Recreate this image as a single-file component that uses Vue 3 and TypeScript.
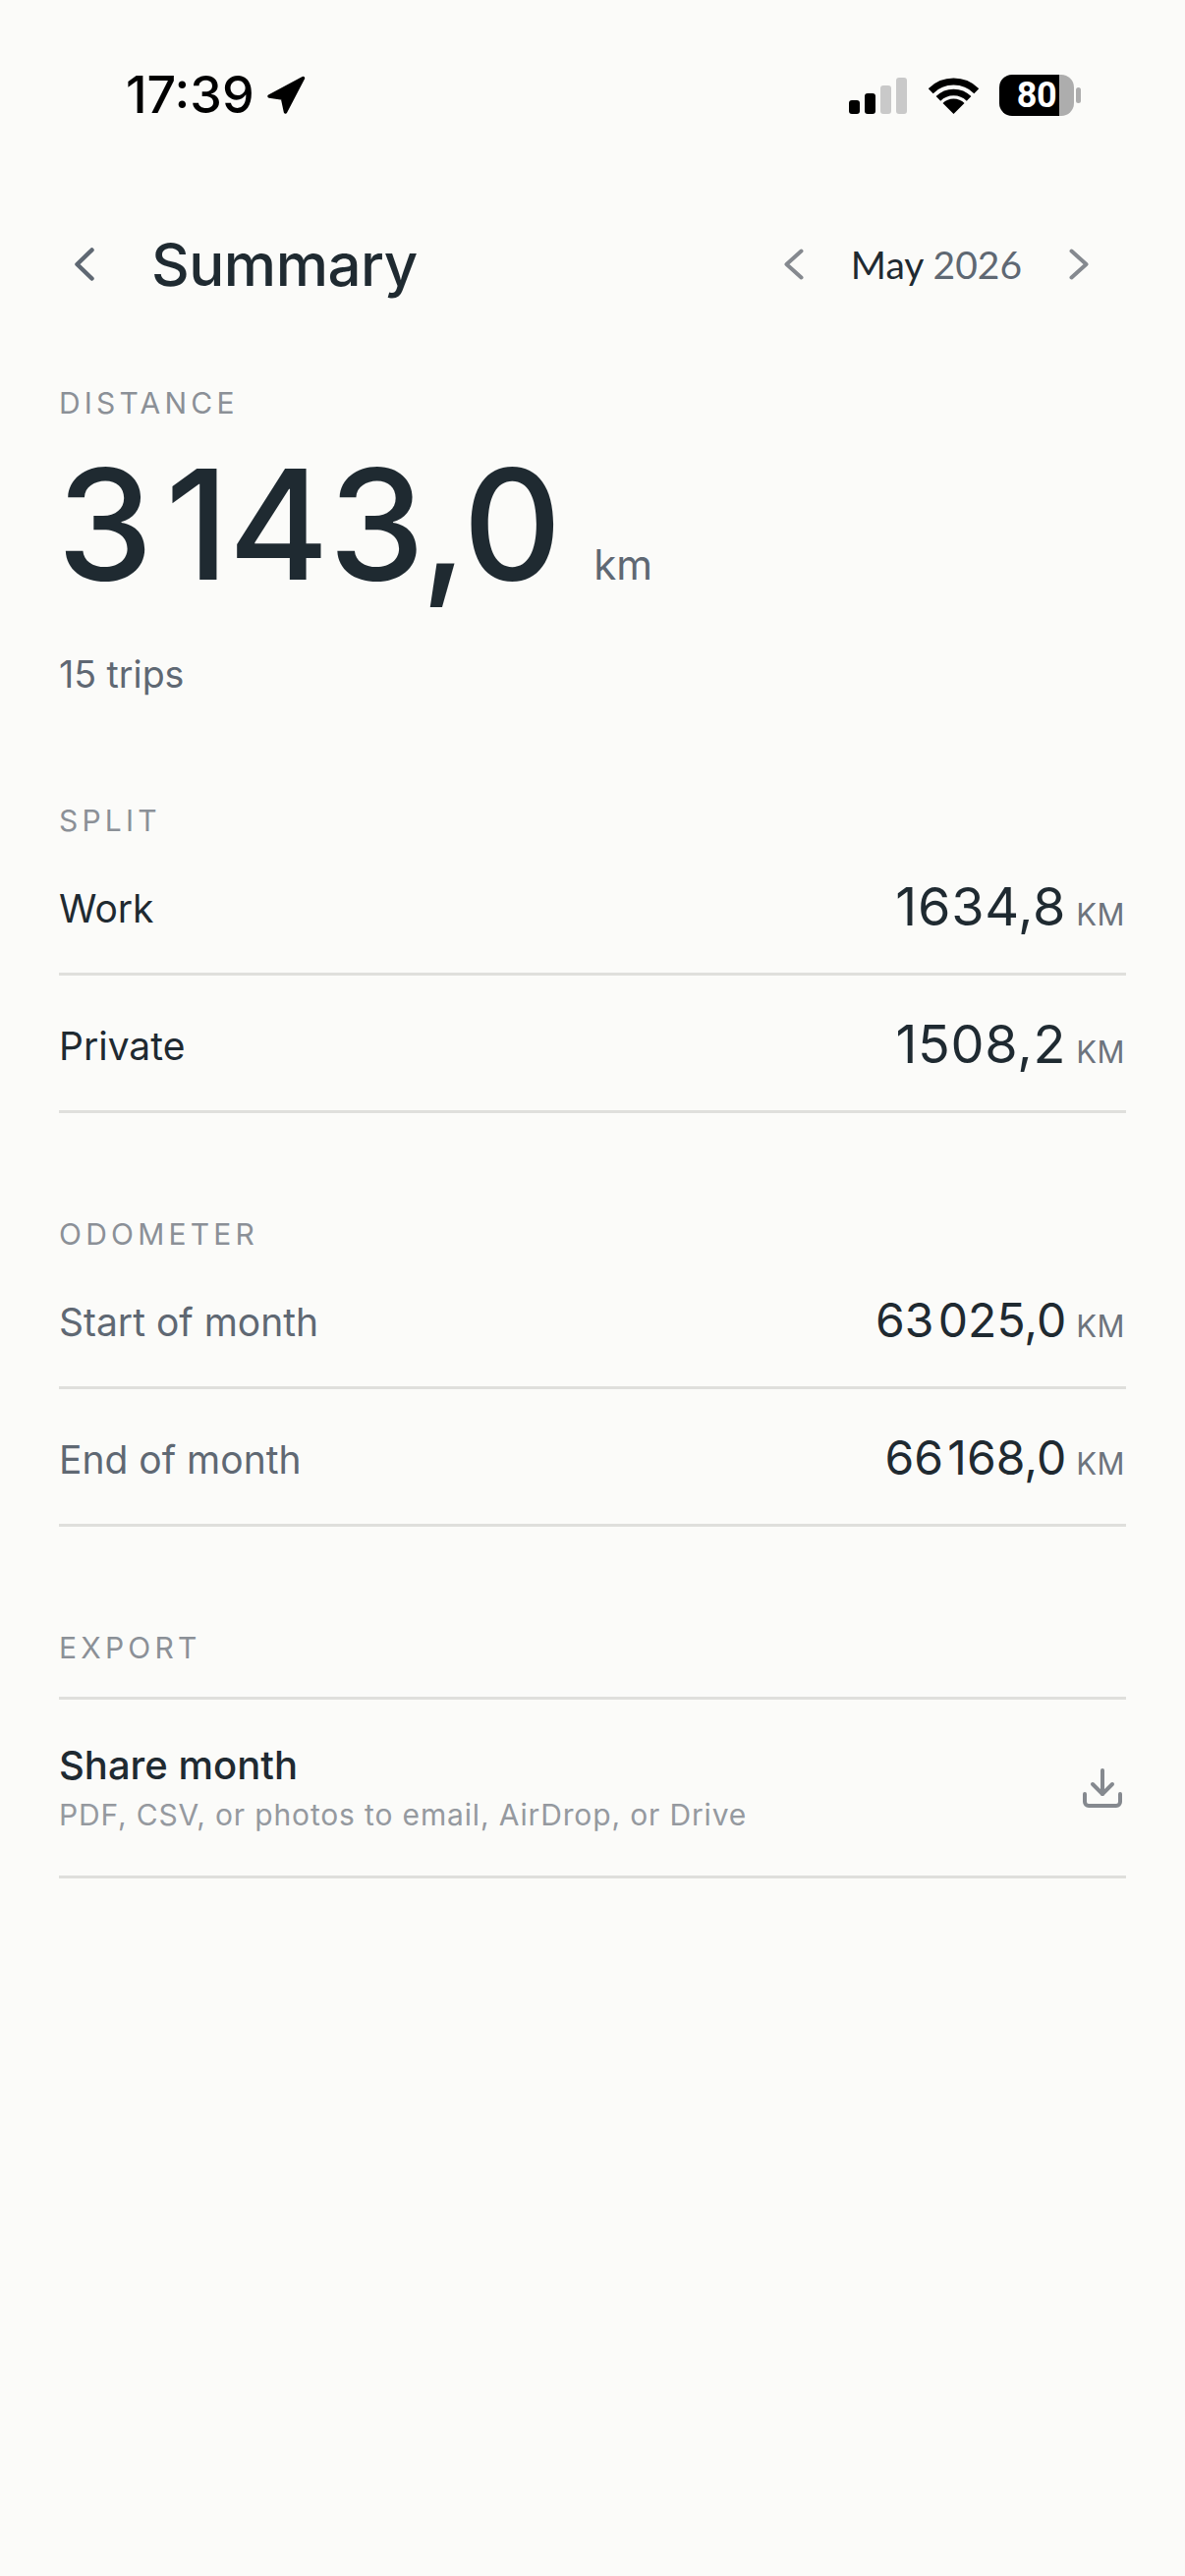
<script setup lang="ts">
interface Row {
  label: string
  value: string
}

const splitRows: Row[] = [
  { label: 'Work', value: '1634,8' },
  { label: 'Private', value: '1508,2' }
]

const odometerRows: Row[] = [
  { label: 'Start of month', value: '63\u200a025,0' },
  { label: 'End of month', value: '66\u200a168,0' }
]
</script>

<template>
  <div class="page">
    <div class="status-bar">
      <div class="status-left">
        <span class="clock">17:39</span>
        <svg class="nav-arrow" width="41" height="40" viewBox="0 0 40 40">
          <path d="M2.5 21 L37 2.5 L19 37 L16 23 Z" fill="#000" stroke="#000" stroke-width="3.5" stroke-linejoin="round" />
        </svg>
      </div>
      <div class="status-right">
        <div class="signal">
          <span class="bar on b1"></span>
          <span class="bar on b2"></span>
          <span class="bar b3"></span>
          <span class="bar b4"></span>
        </div>
        <svg class="wifi" width="51" height="37" viewBox="0 0 51 37" fill="none">
          <path d="M25.5 37 L14.5 26 A15.5 15.5 0 0 1 36.5 26 Z" fill="#000" />
          <path d="M9.9 21.4 A22 22 0 0 1 41.1 21.4" stroke="#000" stroke-width="6.5" />
          <path d="M2.2 13.7 A33 33 0 0 1 48.8 13.7" stroke="#000" stroke-width="7" />
        </svg>
        <div class="battery">
          <div class="battery-body">80</div>
          <span class="battery-nub"></span>
        </div>
      </div>
    </div>

    <header class="header">
      <div class="header-left">
        <svg class="back" width="20" height="34" viewBox="0 0 20 34" fill="none">
          <path d="M17.5 2.5 L2.5 17 L17.5 31.5" stroke="#5f6873" stroke-width="4.5" stroke-linecap="round" stroke-linejoin="round" />
        </svg>
        <h1 class="title">Summary</h1>
      </div>
      <div class="month-nav">
        <svg width="20" height="32" viewBox="0 0 20 32" fill="none">
          <path d="M17.5 2.5 L2.5 16 L17.5 29.5" stroke="#85898f" stroke-width="4" stroke-linecap="round" stroke-linejoin="round" />
        </svg>
        <div class="month"><span class="month-name">May</span> <span class="month-year">2026</span></div>
        <svg width="20" height="32" viewBox="0 0 20 32" fill="none">
          <path d="M2.5 2.5 L17.5 16 L2.5 29.5" stroke="#85898f" stroke-width="4" stroke-linecap="round" stroke-linejoin="round" />
        </svg>
      </div>
    </header>

    <section class="distance">
      <div class="section-label">DISTANCE</div>
      <div class="hero">
        <span class="hero-value">3&#8202;143,0</span>
        <span class="hero-unit">km</span>
      </div>
      <div class="trips">15 trips</div>
    </section>

    <section class="section">
      <div class="section-label">SPLIT</div>
      <div v-for="row in splitRows" :key="row.label" class="row">
        <span class="row-label">{{ row.label }}</span>
        <span class="row-value-wrap">
          <span class="row-value">{{ row.value }}</span>
          <span class="row-unit">KM</span>
        </span>
      </div>
    </section>

    <section class="section">
      <div class="section-label">ODOMETER</div>
      <div v-for="row in odometerRows" :key="row.label" class="row muted">
        <span class="row-label">{{ row.label }}</span>
        <span class="row-value-wrap">
          <span class="row-value">{{ row.value }}</span>
          <span class="row-unit">KM</span>
        </span>
      </div>
    </section>

    <section class="section">
      <div class="section-label export-label">EXPORT</div>
      <div class="share">
        <div class="share-text">
          <div class="share-title">Share month</div>
          <div class="share-sub">PDF, CSV, or photos to email, AirDrop, or Drive</div>
        </div>
        <svg class="share-icon" width="48" height="48" viewBox="0 0 24 24" fill="none" stroke="#85898f" stroke-width="2" stroke-linecap="round" stroke-linejoin="round">
          <path d="M21 15v4a2 2 0 0 1-2 2H5a2 2 0 0 1-2-2v-4" />
          <path d="M7 10l5 5 5-5" />
          <path d="M12 15V3" />
        </svg>
      </div>
    </section>
  </div>
</template>

<style scoped>
.page {
  min-height: 2622px;
  box-sizing: border-box;
  background: #fbfbf9;
  color: #1f2a31;
  font-family: Inter, "Liberation Sans", sans-serif;
}

.status-bar {
  height: 204px;
  box-sizing: border-box;
  padding: 76px 106px 0 128px;
  display: flex;
  justify-content: space-between;
  align-items: flex-start;
}

.status-left {
  display: flex;
  align-items: center;
  gap: 12px;
  height: 42px;
}

.clock {
  font-size: 52px;
  font-weight: 500;
  line-height: 42px;
  color: #000;
}

.status-right {
  display: flex;
  align-items: center;
  height: 42px;
}

.signal {
  display: flex;
  align-items: flex-end;
  gap: 5px;
  height: 37px;
  margin-right: 22px;
}

.bar {
  width: 11px;
  border-radius: 3px;
  background: #c9c9c9;
}

.bar.on {
  background: #000;
}

.b1 { height: 14px; }
.b2 { height: 21px; }
.b3 { height: 29px; }
.b4 { height: 37px; }

.wifi {
  margin-right: 21px;
}

.battery {
  display: flex;
  align-items: center;
  gap: 2px;
}

.battery-body {
  width: 76px;
  height: 42px;
  border-radius: 13px;
  background: linear-gradient(90deg, #000 80%, #adadad 80%);
  color: #fff;
  font-family: Roboto, sans-serif;
  font-size: 36px;
  font-weight: 700;
  line-height: 42px;
  text-align: center;
  letter-spacing: -0.5px;
}

.battery-nub {
  width: 5px;
  height: 16px;
  border-radius: 3px;
  background: #adadad;
}

.header {
  height: 132px;
  box-sizing: border-box;
  padding: 0 98px 3px 76px;
  display: flex;
  justify-content: space-between;
  align-items: center;
}

.header-left {
  display: flex;
  align-items: center;
  gap: 58px;
}

.title {
  margin: 0;
  font-size: 60px;
  font-weight: 500;
  letter-spacing: -0.5px;
  line-height: 72px;
}

.month-nav {
  display: flex;
  align-items: center;
  gap: 48px;
}

.month {
  font-family: Lato, sans-serif;
  font-size: 39px;
  line-height: 52px;
}

.month-name {
  color: #1f2a31;
}

.month-year {
  color: #5f6873;
}

.distance {
  margin-top: 56px;
  padding: 0 60px;
}

.section-label {
  height: 36px;
  font-size: 30px;
  line-height: 36px;
  letter-spacing: 4.2px;
  color: #8b9097;
}

.hero {
  height: 212px;
  display: flex;
  align-items: baseline;
  gap: 33px;
}

.hero-value {
  font-size: 156px;
  font-weight: 500;
  line-height: 212px;
  letter-spacing: -0.5px;
  margin-left: -2px;
}

.hero-unit {
  font-size: 42px;
  font-weight: 400;
  color: #5f6873;
}

.trips {
  margin-top: 22px;
  height: 50px;
  font-size: 37.5px;
  line-height: 50px;
  color: #5f6873;
}

.section {
  margin-top: 105px;
  padding: 0 60px;
}

.row {
  height: 140px;
  box-sizing: border-box;
  padding-top: 5px;
  border-bottom: 3px solid #dfdfdc;
  display: flex;
  justify-content: space-between;
  align-items: center;
}

.row-label {
  font-size: 39px;
}

.muted .row-label {
  color: #5f6873;
}

.row-value-wrap {
  display: flex;
  align-items: baseline;
  gap: 10px;
  margin-top: -4px;
}

.row-value {
  font-size: 54px;
  font-weight: 400;
  letter-spacing: 0.7px;
}

.muted .row-value {
  font-size: 48px;
  letter-spacing: 0;
}

.row-unit {
  font-size: 31px;
  letter-spacing: 0.5px;
  color: #6d747d;
  margin-right: 1px;
}

.export-label {
  margin-bottom: 32px;
}

.share {
  height: 185px;
  box-sizing: border-box;
  border-top: 3px solid #dfdfdc;
  border-bottom: 3px solid #dfdfdc;
  display: flex;
  justify-content: space-between;
  align-items: center;
}

.share-title {
  font-size: 40px;
  font-weight: 500;
  line-height: 50px;
}

.share-sub {
  margin-top: 5px;
  font-size: 30px;
  line-height: 40px;
  letter-spacing: 0.85px;
  color: #95999f;
}
</style>

<style>
html,
body {
  margin: 0;
  background: #fbfbf9;
}
</style>
